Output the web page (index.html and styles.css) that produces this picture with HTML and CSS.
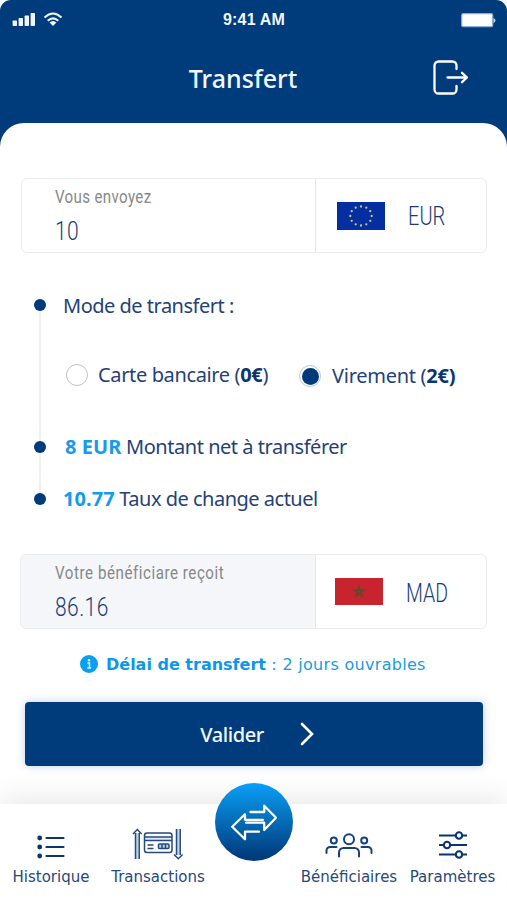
FILE: index.html
```html
<!DOCTYPE html>
<html lang="fr">
<head>
<meta charset="utf-8">
<title>Transfert</title>
<link rel="stylesheet" href="styles.css">
</head>
<body>
<div class="phone">
  <header class="top">
    <div class="status">
      <svg class="signals" width="52" height="16" viewBox="0 0 52 16">
        <g fill="#eef5fc"><rect x=".6" y="8.500" width="4.400" height="5.500" rx=".7"/><rect x="6.600" y="6" width="4.400" height="8" rx=".7"/><rect x="12.600" y="3.500" width="4.400" height="10.500" rx=".7"/><rect x="18.600" y="1" width="4.400" height="13" rx=".7"/></g>
        <g fill="none" stroke="#eef5fc" stroke-width="2"><path d="M32.500 5.500Q41-2.500 49.500 5.500"/><path d="M35.700 8.800Q41 4 46.300 8.800"/></g>
        <path d="M37.600 10.600Q41 7.600 44.400 10.600L41 14Z" fill="#eef5fc"/>
      </svg>
      <span class="clock">9:41 AM</span>
      <svg class="battery" width="35" height="15" viewBox="0 0 35 15"><rect x=".7" y=".7" width="31" height="13" rx="1.500" fill="#fff" stroke="#8eadd0" stroke-width="1.200"/><path d="M32.500 5a2.600 2.600 0 0 1 0 5z" fill="#c9d9ea"/></svg>
    </div>
    <div class="titlebar">
      <h1>Transfert</h1>
      <svg class="logout" width="36" height="36" viewBox="0 0 36 36" fill="none" stroke="#fff" stroke-width="2.300" stroke-linecap="round" stroke-linejoin="round"><path d="M23.500 9V5.500a4 4 0 0 0-4-4H5.500a4 4 0 0 0-4 4v24a4 4 0 0 0 4 4h14a4 4 0 0 0 4-4V26M14.500 17.500h19M29 12.800l5 4.700-5 4.700"/></svg>
    </div>
  </header>

  <main class="sheet">
    <section class="field send">
      <div class="amount"><span class="label narrow">Vous envoyez</span><span class="value narrow">10</span></div>
      <div class="currency">
        <svg width="48" height="28" viewBox="0 0 48 28"><rect width="48" height="28" fill="#052fa0"/><g fill="#c5c878"><circle cx="24" cy="4.500" r="1.150"/><circle cx="29.300" cy="5.700" r="1.150"/><circle cx="33.300" cy="9.200" r="1.150"/><circle cx="34.700" cy="14" r="1.150"/><circle cx="33.300" cy="18.800" r="1.150"/><circle cx="29.300" cy="22.300" r="1.150"/><circle cx="24" cy="23.500" r="1.150"/><circle cx="18.700" cy="22.300" r="1.150"/><circle cx="14.700" cy="18.800" r="1.150"/><circle cx="13.300" cy="14" r="1.150"/><circle cx="14.700" cy="9.200" r="1.150"/><circle cx="18.700" cy="5.700" r="1.150"/></g></svg>
        <span class="code narrow">EUR</span>
      </div>
    </section>

    <section class="steps">
      <div class="step mode"><i class="dot"></i><span class="t-mode">Mode de transfert :</span></div>
      <div class="options">
        <label class="option"><i class="radio"></i><span class="t-card">Carte bancaire (<b>0€</b>)</span></label>
        <label class="option wire"><i class="radio on"></i><span class="t-wire">Virement (<b>2€)</b></span></label>
      </div>
      <div class="step net"><i class="dot"></i><span class="t-net"><b class="hl">8 EUR</b> Montant net à transférer</span></div>
      <div class="step rate"><i class="dot"></i><span class="t-rate"><b class="hl">10.77</b> Taux de change actuel</span></div>
    </section>

    <section class="field receive">
      <div class="amount"><span class="label narrow">Votre bénéficiare reçoit</span><span class="value narrow">86.16</span></div>
      <div class="currency">
        <svg width="48" height="27" viewBox="0 0 48 27"><rect width="48" height="27" fill="#c7242f"/><path d="M24 8.500l3.200 9.600-8.200-5.900h10l-8.200 5.900z" fill="none" stroke="#66472b" stroke-width="1.500"/></svg>
        <span class="code narrow">MAD</span>
      </div>
    </section>

    <p class="delay"><svg width="18" height="18" viewBox="0 0 18 18"><circle cx="9" cy="9" r="9" fill="#0aa0f2"/><circle cx="9" cy="5.200" r="1.200" fill="#d9f1ff"/><path d="M7.400 8H9.500V13M7.300 13h3.800" fill="none" stroke="#d9f1ff" stroke-width="1.500"/></svg><span><b>Délai de transfert</b> : 2 jours ouvrables</span></p>

    <button class="submit"><span>Valider</span><svg width="14" height="24" viewBox="0 0 14 24" fill="none" stroke="#fff" stroke-width="2.600" stroke-linecap="round"><path d="M2 2l10 10L2 22"/></svg></button>
  </main>

  <nav class="nav">
    <a class="item history"><svg width="28" height="32" viewBox="0 0 28 32"><g fill="#0b3570"><circle cx="2.700" cy="10" r="2.400"/><circle cx="2.700" cy="19" r="2.400"/><circle cx="2.700" cy="28" r="2.400"/></g><path d="M9.500 10h17M9.500 19h17M9.500 28h17" stroke="#0b3570" stroke-width="2.200" stroke-linecap="round"/></svg><span>Historique</span></a>
    <a class="item trans"><svg width="52" height="32" viewBox="0 0 52 32" fill="none" stroke="#27497b" stroke-width="1.500"><path d="M5.300 5v26M46.300 1v26" stroke="#bdd4eb" stroke-width="2.500"/><path d="M3.500 31V5M7.200 31V5M1 6l4.300-4.500L9.700 6M44.500 1v26M48.200 1v26M42 26.500l4.300 4.300 4.300-4.300"/><path d="M13 10.700h27" stroke="#dce9f6" stroke-width="2.500"/><rect x="12.500" y="5" width="27.500" height="19.500" rx="2.500"/><path d="M12.500 9h27.500M12.500 12.500h27.500M15.500 17h6M15.500 20.500h6"/><rect x="26.500" y="16" width="10.500" height="4.500" rx="1" fill="#bdd4eb"/><path d="M30 16v4.500M33.500 16v4.500"/></svg><span>Transactions</span></a>
    <a class="swap"><svg width="46" height="40" viewBox="0 0 46 40" fill="none" stroke="#fff" stroke-width="2.300" stroke-linejoin="round" stroke-linecap="round"><path d="M19.500 10H33.200V3.700L45 15.700 33.200 28V20.700H15"/><path d="M32 17.800H14V12.300L1.200 24.800 14 37.300V29.700H28"/></svg></a>
    <a class="item people"><svg width="48" height="32" viewBox="0 0 48 32" fill="none" stroke="#17417b" stroke-width="2" stroke-linecap="round"><circle cx="24" cy="11.200" r="5"/><circle cx="8.800" cy="12.500" r="3"/><circle cx="39.200" cy="12.500" r="3"/><path d="M14 28.500v-4a4.500 4.500 0 0 1 4.500-4.500h11A4.500 4.500 0 0 1 34 24.500v4M1.500 25V22.500a3.500 3.500 0 0 1 3.500-3.500h6.500M46.500 25V22.500a3.500 3.500 0 0 0-3.500-3.500h-6.500"/></svg><span>Bénéficiaires</span></a>
    <a class="item settings"><svg width="28" height="32" viewBox="0 0 28 32" fill="#fff" stroke="#0b3570" stroke-width="2.100"><path d="M0 7.500h28M0 17h28M0 26.500h28"/><circle cx="20" cy="7.500" r="3.200"/><circle cx="8" cy="17" r="3.200"/><circle cx="20" cy="26.500" r="3.200"/></svg><span>Paramètres</span></a>
  </nav>
</div>
</body>
</html>
```
FILE: styles.css
```css
* { box-sizing: border-box; }
body { margin: 0; background: #fff; font-family: "Noto Sans", "Open Sans", sans-serif; color: #1f4278; }
b { font-weight: 700; color: #0b3570; }
span { white-space: nowrap; }
.phone { width: 507px; height: 900px; overflow: hidden; display: flex; flex-direction: column; }

.top { height: 150px; background: #003c7b; border-radius: 11px 11px 0 0; color: #f2f8fe; flex: none; }
.status { display: grid; grid-template-columns: 1fr auto 1fr; align-items: center; height: 40px; padding: 0 11px 0 12px; }
.clock { font: 700 16px/20px "Liberation Sans", sans-serif; letter-spacing: 0.2px; }
.battery { justify-self: end; }
.titlebar { display: grid; grid-template-columns: 1fr auto 1fr; align-items: center; height: 76px; padding-right: 38px; padding-left: 17px; }
.titlebar h1 { grid-column: 2; margin: 0; font-size: 25px; line-height: 36px; font-weight: 500; }
.logout { justify-self: end; }

.sheet { flex: 1; margin-top: -27px; padding: 55px 20px 0; background: #fff; border-radius: 24px 24px 0 0; }
.field { display: flex; height: 75px; border: 1px solid #e9ebed; border-radius: 6px; overflow: hidden; }
.send { margin-left: 1px; }
.amount { width: 294px; padding-left: 33px; border-right: 1px solid #e6e8eb; display: flex; flex-direction: column; align-items: flex-start; }
.receive .amount { width: 295px; padding-left: 34px; background: #f4f6f9; }
.currency { flex: 1; display: flex; align-items: center; padding-left: 21px; gap: 23px; }
.receive .currency { padding-left: 19px; }
.narrow { font-family: Roboto, sans-serif; transform: scaleX(0.84); transform-origin: 0 50%; font-weight: 300; }
.label { font-size: 18px; line-height: 24px; margin-top: 6px; color: #888; font-weight: 400; letter-spacing: 0.4px; }
.receive .label { letter-spacing: 0.65px; }
.value { font-size: 25px; line-height: 32px; margin-top: 7px; color: #1d3d77; letter-spacing: 0.5px; }
.currency .code { font-size: 25px; line-height: 30px; color: #173d74; transform: scaleX(0.78); margin-top: 2px; }
.receive .code { margin-top: 4px; }
.send .code { transform: scaleX(0.8); }

.steps { height: 301px; padding-top: 37px; padding-left: 14px; font-size: 20px; line-height: 30px; background: linear-gradient(#f0f1f2, #f0f1f2) 19px 54px / 2px 192px no-repeat; }
.step { display: flex; align-items: center; height: 30px; }
.dot { width: 12px; height: 12px; border-radius: 50%; background: #003a7a; margin-right: 17px; }
.options { display: flex; align-items: center; height: 30px; margin-top: 40px; padding-left: 32px; }
.option { display: flex; align-items: center; }
.radio { width: 22px; height: 22px; border: 1.5px solid #bfc1c5; border-radius: 50%; margin-right: 10px; }
.radio.on { border-color: #b7cae3; background: #003a7a; background-clip: content-box; padding: 1.5px; margin-right: 11px; }
.wire { margin: 2px 0 0 31px; }
.t-mode { letter-spacing: -0.5px; margin-top: 1px; }
.t-card { letter-spacing: -0.36px; margin-top: -1px; }
.t-wire { letter-spacing: -0.28px; }
.net { margin-top: 42px; }
.rate { margin-top: 22px; }
.t-net { letter-spacing: -0.47px; margin-left: 2px; }
.t-rate { letter-spacing: -0.5px; margin-top: -1px; }
.hl { color: #159bea; letter-spacing: 0.05px; }

.delay { display: flex; align-items: center; gap: 8px; height: 24px; margin: 23px 0 0 60px; font: 16px/24px "DejaVu Sans", sans-serif; color: #199bdd; letter-spacing: 0.3px; }
.delay b { color: #0e97e6; letter-spacing: 0; }
.delay span { margin-top: 1px; }
.submit { display: flex; align-items: center; justify-content: center; gap: 36px; width: 458px; height: 64px; margin: 26px 0 0 5px; padding: 0 0 0 6px; border: 0; border-radius: 4px; background: #003c7b; box-shadow: 0 0 9px rgba(40, 90, 190, .3); color: #f2f8fe; font: 500 20px/30px "Noto Sans", sans-serif; letter-spacing: -0.4px; }
.submit span { margin-top: 1px; }

.nav { position: relative; flex: none; display: flex; height: 96px; background: #fff; box-shadow: 0 -4px 28px rgba(0, 0, 0, .1); font: 15px/20px "DejaVu Sans", sans-serif; color: #27497b; }
.item { display: flex; flex-direction: column; align-items: center; gap: 7px; padding-top: 24px; }
.history { width: 102px; }
.trans { width: 112px; }
.people { width: 110px; margin-left: 80px; }
.settings { width: 97px; }
.swap { position: absolute; left: 215px; top: -21px; width: 78px; height: 78px; border-radius: 50%; background: linear-gradient(#0aa0f6, #003b7c 95%); display: flex; align-items: center; justify-content: center; }
```
